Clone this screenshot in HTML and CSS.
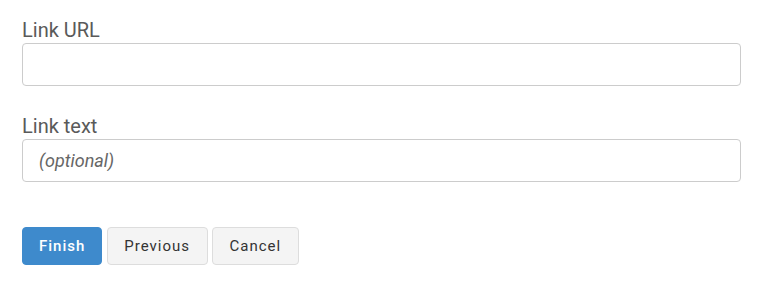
FILE: index.html
```html
<!DOCTYPE html>
<html>
<head>
<meta charset="utf-8">
<link rel="stylesheet" href="styles.css">
</head>
<body>
<form class="form">
  <div class="field">
    <label class="label" for="url">Link URL</label>
    <input class="input" id="url" type="text">
  </div>
  <div class="field">
    <label class="label" for="txt">Link text</label>
    <input class="input" id="txt" type="text" placeholder="(optional)">
  </div>
  <div class="actions">
    <button type="button" class="btn btn-primary">Finish</button>
    <button type="button" class="btn btn-default">Previous</button>
    <button type="button" class="btn btn-default">Cancel</button>
  </div>
</form>
</body>
</html>
```
FILE: styles.css
```css
html, body {
  margin: 0;
  padding: 0;
  background: #fff;
}
body {
  font-family: Roboto, "Liberation Sans", sans-serif;
}
.form {
  display: flex;
  flex-direction: column;
  padding: 18px 18px 0 22px;
}
.field {
  display: flex;
  flex-direction: column;
  margin-bottom: 28px;
}
.label {
  font-size: 20px;
  line-height: 25px;
  color: #5a5a5a;
}
.input {
  box-sizing: border-box;
  width: 719px;
  height: 43px;
  margin: 0;
  border: 1px solid #cccccc;
  border-radius: 4px;
  padding: 0 16px;
  font-family: Roboto, "Liberation Sans", sans-serif;
  font-size: 18px;
  color: #555;
  background: #fff;
  outline: none;
}
.input::placeholder {
  font-style: italic;
  color: #666;
}
.actions {
  display: flex;
  gap: 4.5px;
  margin-top: 17px;
}
.btn {
  box-sizing: border-box;
  height: 38px;
  padding: 0 16.5px;
  border-radius: 4px;
  font-family: Roboto, "Liberation Sans", sans-serif;
  font-size: 15px;
  letter-spacing: 1px;
  cursor: pointer;
}
.btn-primary {
  background: #3e8acc;
  border: 1px solid #3e8acc;
  color: #fff;
  font-weight: 500;
  padding: 0 16px;
}
.btn-default {
  background: #f4f4f4;
  border: 1px solid #dddddd;
  color: #333;
}
```
